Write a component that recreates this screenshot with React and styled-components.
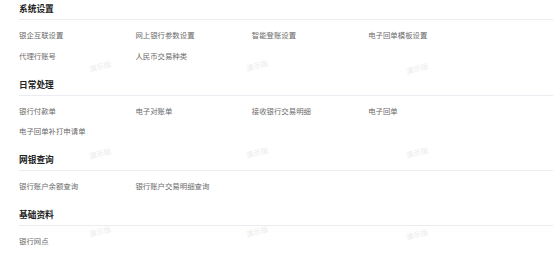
import styled, { createGlobalStyle } from 'styled-components';

const GlobalStyle = createGlobalStyle`
    body {
        margin: 0;
        background: #fff;
        font-family: "Noto Sans CJK SC", "Noto Sans", sans-serif;
    }
`

const sections = [
    {
        title: "系统设置",
        items: ["银企互联设置", "网上银行参数设置", "智能登账设置", "电子回单模板设置", "代理行账号", "人民币交易种类"],
    },
    {
        title: "日常处理",
        items: ["银行付款单", "电子对账单", "接收银行交易明细", "电子回单", "电子回单补打申请单"],
    },
    {
        title: "网银查询",
        items: ["银行账户余额查询", "银行账户交易明细查询"],
    },
    {
        title: "基础资料",
        items: ["银行网点"],
    },
];

// watermark tiles: [x, y]
const marks = [
    [100, 66], [257, 65], [417, 68],
    [100, 153], [257, 152], [417, 152],
    [100, 231], [257, 231], [417, 234],
];

function App() {
    return (
        <Page>
            <GlobalStyle />
            {sections.map((section) => (
                <Section key={section.title}>
                    <Title>{section.title}</Title>
                    <Grid>
                        {section.items.map((item) => (
                            <Item key={item}>{item}</Item>
                        ))}
                    </Grid>
                </Section>
            ))}
            {marks.map(([x, y], i) => (
                <Mark key={i} style={{ left: x, top: y }}>演示版</Mark>
            ))}
        </Page>
    )
}

const Page = styled.div`
    position: relative;
    width: 553px;
    height: 253px;
    overflow: hidden;
    padding: 1px 0 0 19px;
    box-sizing: border-box;
`

const Section = styled.div`
    margin-bottom: 10.5px;
`

const Title = styled.div`
    font-size: 8.7px;
    font-weight: bold;
    color: #222;
    line-height: 16px;
    padding-bottom: 2px;
    border-bottom: 1px solid #ebecf2;
`

const Grid = styled.div`
    display: flex;
    flex-wrap: wrap;
    padding-top: 5px;
`

const Item = styled.div`
    width: 116.4px;
    height: 20.5px;
    line-height: 20.5px;
    font-size: 7.4px;
    color: #6b6b6b;
    white-space: nowrap;
`

const Mark = styled.span`
    position: absolute;
    transform: translate(-50%, -50%) rotate(-15deg);
    font-size: 7.5px;
    color: #ebebeb;
    pointer-events: none;
    white-space: nowrap;
`

export default App;
